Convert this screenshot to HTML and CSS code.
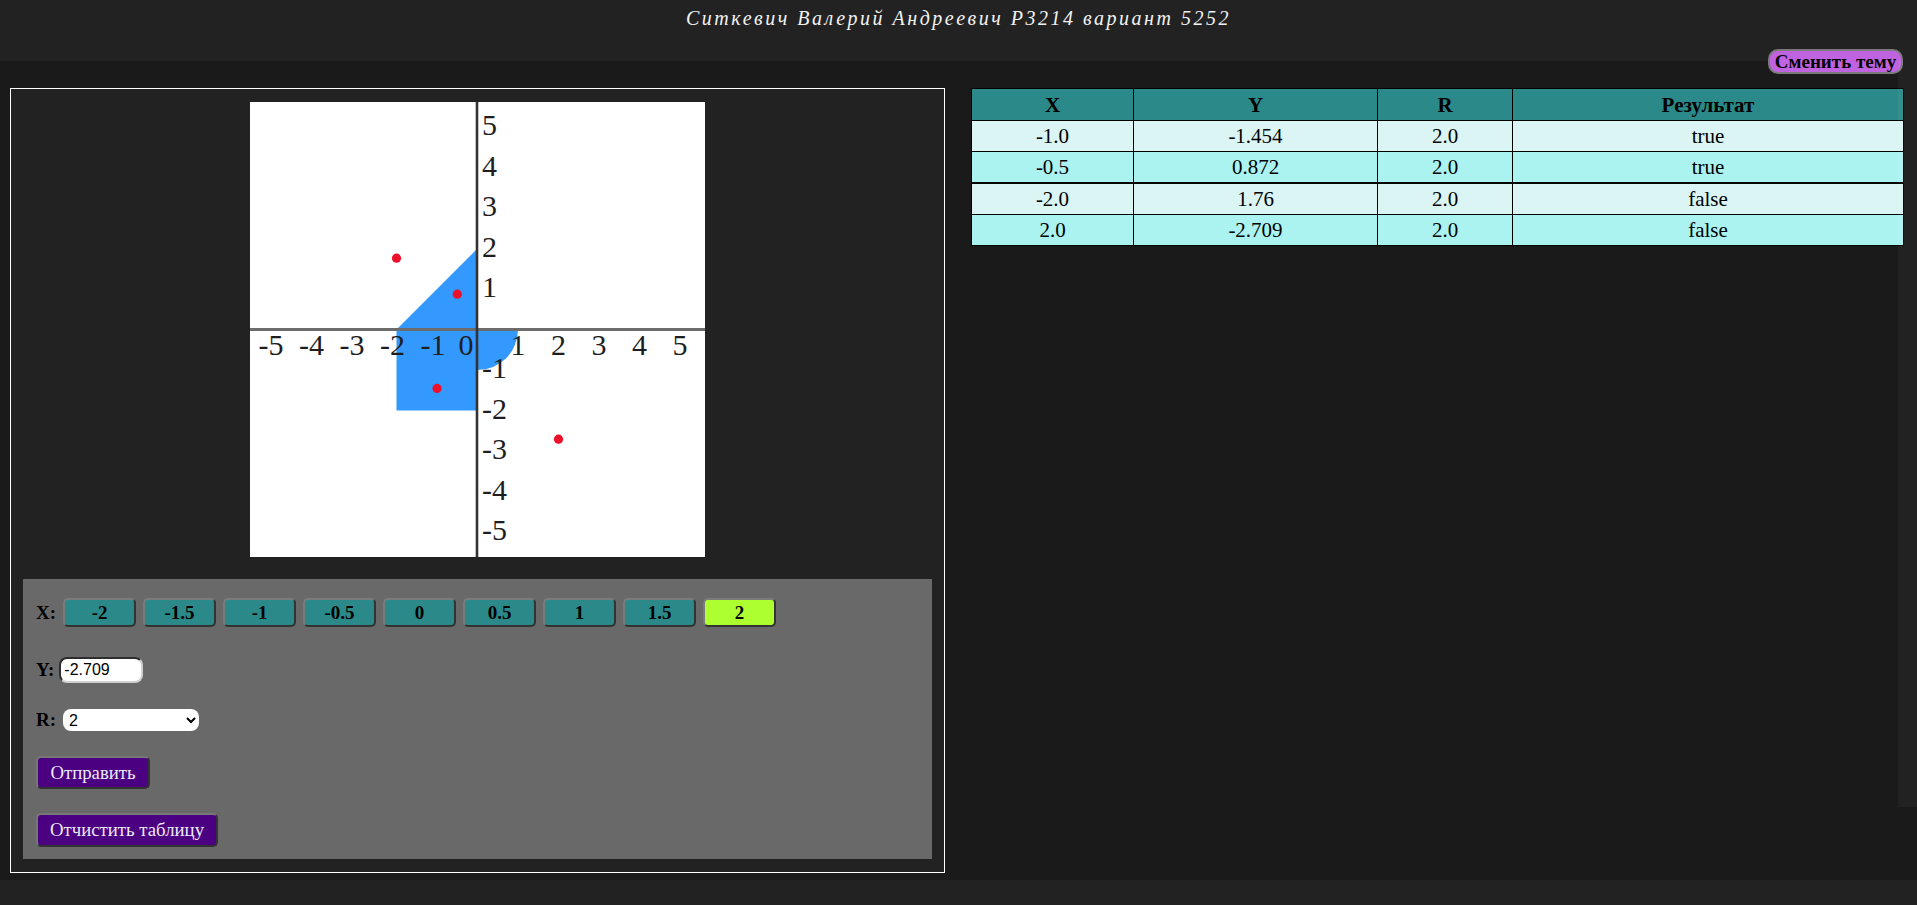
FILE: index.html
```html
<!DOCTYPE html>
<html lang="ru">
<head>
<meta charset="utf-8">
<title>Лабораторная работа</title>
<link rel="stylesheet" href="styles.css">
</head>
<body>
<header class="top">
  <div class="title">Ситкевич Валерий Андреевич P3214 вариант 5252</div>
</header>
<button class="theme-btn">Сменить тему</button>
<main class="main">
  <section class="panel">
    <div class="graph-wrap">
      <svg class="graph" width="455" height="455" viewBox="0 0 455 455" xmlns="http://www.w3.org/2000/svg">
        <rect x="0" y="0" width="455" height="455" fill="#ffffff"/>
        <polygon points="146.5,227.5 227.5,146.5 227.5,227.5" fill="#3399ff"/>
        <rect x="146.5" y="227.5" width="81" height="81" fill="#3399ff"/>
        <path d="M227.5,227.5 L268,227.5 A40.5,40.5 0 0 1 227.5,268 Z" fill="#3399ff"/>
        <line x1="0" y1="227.5" x2="455" y2="227.5" stroke="#6c6c6c" stroke-width="3"/>
        <line x1="227" y1="0" x2="227" y2="455" stroke="#333333" stroke-width="2.6"/>
        <g class="xl" font-family="'Liberation Serif', 'Times New Roman', serif" font-size="30" fill="#1e1e1e" text-anchor="middle">
          <text x="21" y="253">-5</text>
          <text x="61.5" y="253">-4</text>
          <text x="102" y="253">-3</text>
          <text x="142.5" y="253">-2</text>
          <text x="183" y="253">-1</text>
          <text x="216" y="253">0</text>
          <text x="268" y="253">1</text>
          <text x="308.5" y="253">2</text>
          <text x="349" y="253">3</text>
          <text x="389.5" y="253">4</text>
          <text x="430" y="253">5</text>
        </g>
        <g class="yl" font-family="'Liberation Serif', 'Times New Roman', serif" font-size="30" fill="#1e1e1e">
          <text x="232" y="33">5</text>
          <text x="232" y="73.5">4</text>
          <text x="232" y="114">3</text>
          <text x="232" y="154.5">2</text>
          <text x="232" y="195">1</text>
          <text x="232" y="276">-1</text>
          <text x="232" y="316.5">-2</text>
          <text x="232" y="357">-3</text>
          <text x="232" y="397.5">-4</text>
          <text x="232" y="438">-5</text>
        </g>
        <circle cx="187" cy="286.4" r="4.6" fill="#ec0f2a"/>
        <circle cx="207.3" cy="192.2" r="4.6" fill="#ec0f2a"/>
        <circle cx="146.5" cy="156.2" r="4.6" fill="#ec0f2a"/>
        <circle cx="308.5" cy="337.2" r="4.6" fill="#ec0f2a"/>
      </svg>
    </div>
    <form class="form">
      <div class="row row-x">
        <label class="lbl">X:</label>
        <button type="button" class="xbtn">-2</button>
        <button type="button" class="xbtn">-1.5</button>
        <button type="button" class="xbtn">-1</button>
        <button type="button" class="xbtn">-0.5</button>
        <button type="button" class="xbtn">0</button>
        <button type="button" class="xbtn">0.5</button>
        <button type="button" class="xbtn">1</button>
        <button type="button" class="xbtn">1.5</button>
        <button type="button" class="xbtn active">2</button>
      </div>
      <div class="row row-y">
        <label class="lbl">Y:</label>
        <input class="yin" type="text" value="-2.709">
      </div>
      <div class="row row-r">
        <label class="lbl">R:</label>
        <select class="rsel">
          <option>1</option>
          <option selected>2</option>
          <option>3</option>
          <option>4</option>
          <option>5</option>
        </select>
      </div>
      <div class="row row-submit">
        <button type="button" class="pbtn send">Отправить</button>
      </div>
      <div class="row row-clear">
        <button type="button" class="pbtn clear">Отчистить таблицу</button>
      </div>
    </form>
  </section>
  <section class="results">
    <table class="tbl">
      <colgroup>
        <col class="c1"><col class="c2"><col class="c3"><col class="c4">
      </colgroup>
      <thead>
        <tr><th>X</th><th>Y</th><th>R</th><th>Результат</th></tr>
      </thead>
      <tbody>
        <tr><td>-1.0</td><td>-1.454</td><td>2.0</td><td>true</td></tr>
        <tr class="thick"><td>-0.5</td><td>0.872</td><td>2.0</td><td>true</td></tr>
        <tr><td>-2.0</td><td>1.76</td><td>2.0</td><td>false</td></tr>
        <tr><td>2.0</td><td>-2.709</td><td>2.0</td><td>false</td></tr>
      </tbody>
    </table>
  </section>
</main>
<div class="scroll-strip"></div>
<footer class="bottom"></footer>
</body>
</html>
```
FILE: styles.css
```css
html, body {
  margin: 0;
  padding: 0;
}
body {
  background: #1a1a1a;
  font-family: "Liberation Serif", "Times New Roman", serif;
  color: #000;
  width: 1917px;
  height: 905px;
  overflow: hidden;
  position: relative;
}
.top {
  height: 61px;
  background: #222222;
  box-sizing: border-box;
  padding-top: 6px;
}
.title {
  text-align: center;
  color: #f2f2f2;
  font-style: italic;
  font-size: 20px;
  line-height: 24px;
  letter-spacing: 2.5px;
}
.theme-btn {
  position: absolute;
  top: 49px;
  right: 14px;
  width: 135px;
  height: 25px;
  box-sizing: border-box;
  padding: 0;
  background: #c063e0;
  border: 2px solid #7a7a7a;
  border-radius: 10px;
  font-family: "Liberation Serif", "Times New Roman", serif;
  font-weight: bold;
  font-size: 19px;
  line-height: 20px;
  color: #000;
  white-space: nowrap;
}
.main {
  display: flex;
  align-items: flex-start;
  gap: 26px;
  padding: 27px 14px 7px 10px;
  height: 819px;
  box-sizing: border-box;
}
.panel {
  width: 935px;
  height: 785px;
  box-sizing: border-box;
  border: 1px solid #ffffff;
  background: #222222;
  padding: 13px 12px;
  flex: none;
}
.graph-wrap {
  display: flex;
  justify-content: center;
  height: 455px;
}
.graph {
  display: block;
}
.form {
  margin-top: 22px;
  height: 280px;
  box-sizing: border-box;
  background: #696969;
  padding: 19px 13px 12px 13px;
  display: flex;
  flex-direction: column;
}
.row {
  display: flex;
  align-items: center;
}
.lbl {
  font-weight: bold;
  font-size: 19px;
  line-height: 22px;
  color: #000;
}
.row-x {
  height: 29px;
  gap: 7px;
}
.xbtn {
  width: 73px;
  height: 29px;
  box-sizing: border-box;
  padding: 0;
  background: #2b8a89;
  border: 2px solid;
  border-color: #7b7b7b #333333 #333333 #7b7b7b;
  border-radius: 5px;
  font-family: "Liberation Serif", "Times New Roman", serif;
  font-weight: bold;
  font-size: 19px;
  color: #000;
}
.xbtn.active {
  background: #adff2f;
}
.row-y {
  margin-top: 30px;
  height: 26px;
  gap: 5px;
}
.yin {
  width: 84px;
  height: 26px;
  box-sizing: border-box;
  border: 2px solid;
  border-color: #2e2e2e #d0d0d0 #d0d0d0 #2e2e2e;
  border-radius: 8px;
  padding: 1px 3px;
  font-family: "Liberation Sans", Arial, sans-serif;
  font-size: 16px;
  color: #000;
  background: #fff;
}
.row-r {
  margin-top: 26px;
  height: 22px;
  gap: 7px;
}
.rsel {
  width: 136px;
  height: 22px;
  box-sizing: border-box;
  border: none;
  border-radius: 8px;
  background: #ffffff;
  font-family: "Liberation Sans", Arial, sans-serif;
  font-size: 16px;
  color: #000;
  padding: 0 2px;
}
.row-submit {
  margin-top: 25px;
  height: 33px;
}
.row-clear {
  margin-top: 24px;
  height: 34px;
}
.pbtn {
  box-sizing: border-box;
  background: #4b0082;
  color: #ecebf5;
  border: 2px solid;
  border-color: #777777 #333333 #333333 #777777;
  border-radius: 5px;
  font-family: "Liberation Serif", "Times New Roman", serif;
  font-size: 18.8px;
  padding: 0;
  white-space: nowrap;
  text-align: center;
}
.send {
  width: 114px;
  height: 33px;
}
.clear {
  width: 182px;
  height: 34px;
}
.results {
  flex: 1;
  min-width: 0;
}
.tbl {
  width: 100%;
  border-collapse: collapse;
  border: 1px solid #000;
  font-size: 21px;
  text-align: center;
  table-layout: fixed;
}
.c1 { width: 162px; }
.c2 { width: 244px; }
.c3 { width: 135px; }
.c4 { width: 391px; }
.tbl th {
  background: #2b8a89;
  border: 1px solid #000;
  font-weight: bold;
  padding: 5px 4px 4px;
  line-height: 22px;
}
.tbl td {
  border: 1px solid #000;
  padding: 4px;
  line-height: 22px;
}
.tbl tbody tr:nth-child(odd) td {
  background: #dbf5f5;
}
.tbl tbody tr:nth-child(even) td {
  background: #abf3f1;
}
.tbl tr.thick td {
  border-bottom: 2px solid #000;
}
.scroll-strip {
  position: absolute;
  top: 61px;
  right: 0;
  width: 19px;
  height: 746px;
  background: rgba(255, 255, 255, 0.04);
  pointer-events: none;
}
.bottom {
  height: 25px;
  background: #222222;
}
```
